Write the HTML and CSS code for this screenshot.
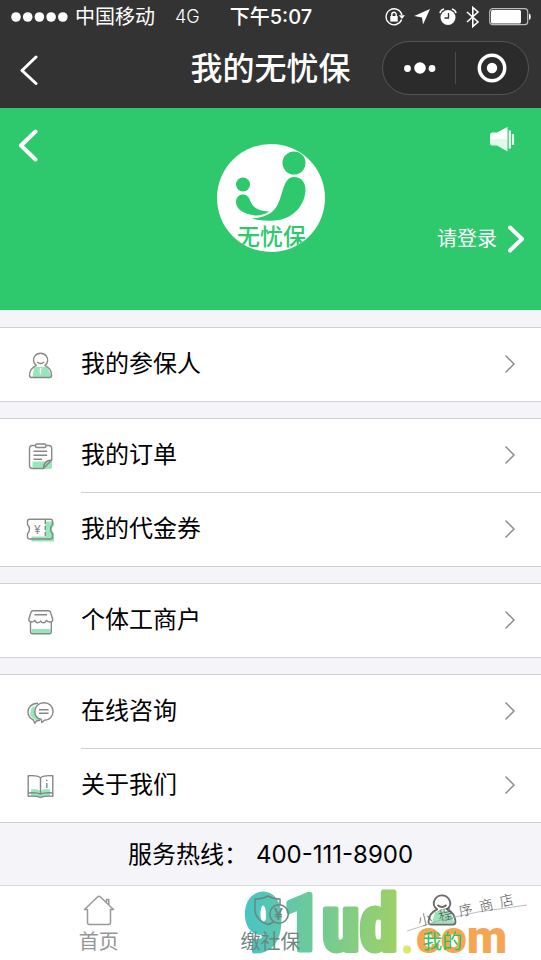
FILE: index.html
```html
<!DOCTYPE html>
<html lang="zh-CN">
<head>
<meta charset="utf-8">
<meta name="viewport" content="width=device-width, initial-scale=1">
<title>我的无忧保</title>
<link rel="stylesheet" href="styles.css">
</head>
<body>
<header class="top">
  <div class="status">
    <svg class="signal" width="58" height="12" viewBox="0 0 58 12" fill="#fff"><circle cx="5" cy="6" r="4.8"/><circle cx="16.7" cy="6" r="4.8"/><circle cx="28.4" cy="6" r="4.8"/><circle cx="40.1" cy="6" r="4.8"/><circle cx="51.8" cy="6" r="4.8"/></svg>
    <span class="carrier">中国移动</span>
    <span class="network">4G</span>
    <span class="time">下午5:07</span>
    <span class="status-icons">
      <svg width="20" height="20" viewBox="0 0 20 20" fill="none" stroke="#fff" stroke-width="1.4"><path d="M16.6 12.6A8 8 0 1 1 16.9 8"/><path d="M13.8 8.2h6.2l-3.1 3.8z" fill="#fff" stroke="none"/><rect x="5.3" y="9" width="7.4" height="5.6" fill="#fff" stroke="none"/><path d="M6.8 9.5V7.6a2.2 2.4 0 0 1 4.4 0v1.9"/></svg>
      <svg width="16" height="20" viewBox="0 0 16 20" fill="#fff"><path d="M16 2 9 17.5 8 10.5.2 9z"/></svg>
      <svg width="18" height="20" viewBox="0 0 18 20"><circle cx="9" cy="10.5" r="7.5" fill="#fff"/><path d="M9.5 6v5H5.5" fill="none" stroke="#333" stroke-width="1.3"/><path d="M1 6.2Q1.5 3 5 2M17 6.2Q16.500 3 13 2" fill="none" stroke="#fff" stroke-width="1.6"/></svg>
      <svg width="14" height="22" viewBox="0 0 14 22" fill="none" stroke="#fff" stroke-width="1.6"><path d="M1 6l11 10-5.200 4.500V1.500L12 6 1 16"/></svg>
      <svg width="42" height="18" viewBox="0 0 42 18"><rect x=".7" y=".7" width="38" height="16" rx="3" fill="none" stroke="#bbb" stroke-width="1.200"/><rect x="2" y="2" width="30" height="13.500" rx="1.500" fill="#fff"/><path d="M40 5.500q1.800.5 1.800 3.200T40 12z" fill="#fff"/></svg>
    </span>
  </div>
  <nav class="nav">
    <button class="icon-button nav-back" aria-label="返回"><svg width="18" height="30" viewBox="0 0 18 30" fill="none" stroke="#fff" stroke-width="3" stroke-linecap="round" stroke-linejoin="round"><path d="M16 2 2 15.500 16 28.500"/></svg></button>
    <h1 class="title">我的无忧保</h1>
    <div class="capsule">
      <button class="icon-button capsule-part" aria-label="更多"><svg width="34" height="14" viewBox="0 0 34 14" fill="#fff"><circle cx="5.500" cy="7.500" r="3.400"/><circle cx="18" cy="7" r="5.800"/><circle cx="30" cy="7.500" r="3.400"/></svg></button>
      <button class="icon-button capsule-part" aria-label="关闭"><svg width="30" height="30" viewBox="0 0 30 30"><circle cx="15" cy="15" r="12.700" fill="none" stroke="#fff" stroke-width="3.500"/><circle cx="15" cy="15" r="5.200" fill="#fff"/></svg></button>
    </div>
  </nav>
</header>

<main>
  <section class="hero">
    <button class="icon-button hero-back" aria-label="返回"><svg width="22" height="38" viewBox="0 0 22 38" fill="none" stroke="#fff" stroke-width="4" stroke-linecap="round" stroke-linejoin="round"><path d="M19.500 5.500 5 19.500 19.500 33.500"/></svg></button>
    <svg class="avatar" width="108" height="108" viewBox="0 0 108 108" role="img" aria-label="无忧保">
      <defs><clipPath id="round"><circle cx="54" cy="54" r="54"/></clipPath></defs>
      <g clip-path="url(#round)">
        <rect width="108" height="108" fill="#fff"/>
        <g fill="#2ec96d">
          <circle cx="77" cy="19" r="11.500"/>
          <circle cx="26" cy="40.500" r="7"/>
          <path d="M19 58C19 49 30 48 32.500 55C35 62 39 67 52 67.500C48 70.500 42 72 38 71.500C28 70 19 66 19 58Z"/>
          <path d="M35 74.500C42 74 51 72 56 67C67 57 64 33 77 33C85 33 88.500 39 88.500 46C88 62 75 76 57 76.500C49 77 41 76.500 35 74.500Z"/>
          <text class="avatar-name" x="20" y="101">无忧保</text>
        </g>
      </g>
    </svg>
    <div class="hero-side">
      <button class="icon-button speaker" aria-label="消息"><svg width="26" height="28" viewBox="0 0 26 28"><path d="M1 9q0-2 2-2.500h5L18.500 1v13H1z" fill="#fff"/><path d="M1 13h17.500v12.500L8 19.500H3q-2 0-2-2.500z" fill="#e0fbea"/><path d="M20.800 4.500v18" stroke="#fff" stroke-width="2.200"/><path d="M24 8v11" stroke="#e0fbea" stroke-width="2.200"/></svg></button>
      <a class="login" href="#login">请登录<svg width="18" height="28" viewBox="0 0 18 28" fill="none" stroke="#fff" stroke-width="4" stroke-linecap="round" stroke-linejoin="round"><path d="M3 2.500 15 14 3 25.500"/></svg></a>
    </div>
  </section>

  <div class="groups">
    <section class="group">
      <a class="row" href="#insured">
        <svg class="row-icon" viewBox="0 0 28 28"><path class="tint" d="M8 16h13l4.500 8.500q0 2-2 2H6.500z"/><path d="M10.300 14.300C7 12 6.800 8 8.800 5.200Q11 2.200 14.600 2.200T20.400 5.200C22.400 8 22.200 12 18.900 14.300C23.500 16.500 25.600 21 25.600 24.500q0 2-2 2H5.500q-2 0-2-2C3.500 21 5.700 16.500 10.300 14.300Z"/><path d="M11 11q3.600 3.200 7.200 0"/><path class="light" d="M14.500 17v6"/></svg>
        <span class="row-body">我的参保人<svg class="arrow" viewBox="0 0 12 20"><path d="M1.500 1.500 10 10 1.500 18.500"/></svg></span>
      </a>
    </section>
    <section class="group">
      <a class="row" href="#orders">
        <svg class="row-icon" viewBox="0 0 28 28"><path class="tint" d="M6.500 19.500H26V25q0 2-2 2H6.500z"/><path d="M9.500 3.500h-3q-3 0-3 3v17q0 3 3 3H17.500L25.700 18V6.500q0-3-3-3h-3M17.500 26.500q0-8 8.200-8.500"/><rect x="9.500" y="2" width="10.500" height="3.500" rx="1.500"/><path d="M7.500 9.200h13.700M7.500 13.200h13.700M7.500 17.200H16"/></svg>
        <span class="row-body">我的订单<svg class="arrow" viewBox="0 0 12 20"><path d="M1.500 1.500 10 10 1.500 18.500"/></svg></span>
      </a>
      <a class="row" href="#vouchers">
        <svg class="row-icon" viewBox="0 0 28 28"><path class="tint" d="M19.300 6.500H28v4q-4 4 0 8v8H5.500v-5h13.800z"/><path d="M4 4.200h20.500q2 0 2 2v3.300q-4 4.700 0 9.200V22q0 2-2 2H4q-2.500 0-2.500-2v-3.300q4-4.500 0-9.200V6.200q0-2 2.500-2Z"/><path d="M19.300 5v18" stroke-dasharray="4 2"/><text class="yen" x="8" y="18.500">¥</text></svg>
        <span class="row-body">我的代金券<svg class="arrow" viewBox="0 0 12 20"><path d="M1.500 1.500 10 10 1.500 18.500"/></svg></span>
      </a>
    </section>
    <section class="group">
      <a class="row" href="#business">
        <svg class="row-icon" viewBox="0 0 28 28"><path class="tint" d="M5.500 22h19v4.500h-19z"/><path d="M7 3.700h15.500q1.500 0 2 1.500l2.200 7q.2 2.800-3 2.800-2.500 0-3.200-1.700-1 2.500-3 2.500T14.700 14q-1 1.800-2.900 1.800T8.800 13.300Q8 15 5.700 15 2.800 14.800 2.800 12.200L5 5.200Q5.500 3.700 7 3.700ZM4.500 15v9.500q0 2.200 2 2.200h16.800q2 0 2-2.200V15M8.500 7.800h12.500"/></svg>
        <span class="row-body">个体工商户<svg class="arrow" viewBox="0 0 12 20"><path d="M1.500 1.500 10 10 1.500 18.500"/></svg></span>
      </a>
    </section>
    <section class="group">
      <a class="row" href="#chat">
        <svg class="row-icon" viewBox="0 0 28 28"><path class="tint" d="M8.500 7Q3 12 4.500 18l6 5 4-1Q6.500 17 8.500 7Z"/><path d="M12 5.200C5 5.200 2 9.500 2 14.200q0 5 5.500 8l1.200 3 2-2.500 3.300-.5"/><path d="M18 4.700c5.500 0 9 4 9 8.800s-3.500 8.700-8.500 8.700L15.800 24.500l-.6-3C11 20.500 8.800 17.500 8.800 13.500c0-4.800 3.700-8.800 9.200-8.800ZM13 11.700h9.500M13 15.200h9.500"/></svg>
        <span class="row-body">在线咨询<svg class="arrow" viewBox="0 0 12 20"><path d="M1.500 1.500 10 10 1.500 18.500"/></svg></span>
      </a>
      <a class="row" href="#about">
        <svg class="row-icon" viewBox="0 0 28 28"><path class="tint" d="M5 18.500q5-1.500 9.500 1.500 4.500-3 9.500-1.500v7q-5-.5-9.500 1.500Q10 25 5 25.500z"/><path d="M14.500 6.700Q11 4 2.200 4.800v20.400q8.800-.5 12.300 1.300 3.500-1.800 12.300-1.300V4.800Q18 4 14.500 6.700V23M2.200 22q8.800-1 12.300 1.200Q18 21 26.800 22M20.800 12v5M20.800 8.800v1.400"/></svg>
        <span class="row-body">关于我们<svg class="arrow" viewBox="0 0 12 20"><path d="M1.500 1.500 10 10 1.500 18.500"/></svg></span>
      </a>
    </section>
  </div>

  <p class="hotline"><span>服务热线：</span><a class="phone" href="tel:4001118900">400-111-8900</a></p>
</main>

<footer class="tabbar">
  <svg class="watermark" width="301" height="74" viewBox="240 886 301 74" aria-hidden="true">
    <defs><linearGradient id="sea" gradientUnits="userSpaceOnUse" x1="244" y1="0" x2="394" y2="0"><stop offset="0" stop-color="#48c4c4"/><stop offset="1" stop-color="#9cd068"/></linearGradient></defs>
    <text class="mark-main" x="244" y="950" fill="url(#sea)" stroke="url(#sea)">91ud</text>
    <circle cx="407" cy="949.500" r="4" fill="#dfe76b"/>
    <text class="mark-com" x="416" y="953">com</text>
  </svg>
  <a class="tab" href="#home">
    <svg width="32" height="32" viewBox="0 0 32 32"><path d="M4.500 15.500H1.500L14.500 3q1.500-1.400 3 0L30.500 15.500H27.500V28.500q0 2-2 2H6.500q-2 0-2-2ZM23.500 9V5.500h2.300v5.700"/></svg>
    <span>首页</span>
  </a>
  <a class="tab tab-pay" href="#pay">
    <svg width="36" height="32" viewBox="0 0 36 32"><path d="M27 11V5Q20 5 15 2 10 5 2 5v12q1 9.500 13 13.500 3-1 5.500-2.500"/><circle cx="26" cy="20" r="9.300"/><text class="yen yen-large" x="21" y="26">¥</text></svg>
    <span>缴社保</span>
  </a>
  <a class="tab tab-current" href="#mine" aria-current="page">
    <svg width="32" height="32" viewBox="0 0 32 32"><path class="tint" d="M9 18q7-3 15 0l4.500 11H6z"/><path d="M11.200 15.300C7.500 12.500 7 8.500 9 5.200Q11.500 1.300 16 1.300T23 5.200C25 8.500 24.500 12.500 20.800 15.300C26 17.500 29 22 29.500 27.500q0 3-2.500 3H5q-2.500 0-2.500-3C3 22 6 17.500 11.200 15.300Z"/><path d="M11.500 11q4.500 4 9 0"/></svg>
    <span>我的</span>
  </a>
  <svg class="watermark watermark-over" width="301" height="74" viewBox="240 886 301 74" aria-hidden="true">
    <path d="M407 931 441 920 478 912 527 905" fill="none" stroke="#aaa" stroke-width=".8"/>
    <text class="mark-note" transform="translate(419 926) rotate(-13)">小&#8194;程&#8194;序&#8194;商&#8194;店</text>
  </svg>
</footer>
</body>
</html>
```
FILE: styles.css
```css
* {
  box-sizing: border-box;
}

body {
  margin: 0;
  min-height: 100vh;
  display: flex;
  flex-direction: column;
  background: #f4f4f9;
  color: #000;
  font-family: Inter, "Noto Sans CJK SC", sans-serif;
  font-size: 24px;
}

a {
  color: inherit;
  text-decoration: none;
}

svg {
  display: block;
  flex: none;
}

.icon-button {
  display: flex;
  align-items: center;
  justify-content: center;
  padding: 0;
  border: 0;
  background: none;
}

.top {
  background: #333;
  color: #fff;
  padding-bottom: 6px;
}

.status {
  display: flex;
  align-items: center;
  height: 34px;
  padding: 0 10px 0 11px;
  font-size: 20px;
  font-weight: 400;
  line-height: 34px;
}

.carrier {
  margin-left: 6px;
}

.network {
  margin-left: 20px;
  font-size: 18px;
  font-weight: 300;
}

.time {
  margin-left: 30px;
  font-weight: 500;
}

.status-icons {
  display: flex;
  align-items: center;
  gap: 9px;
  margin-left: auto;
}

.nav {
  display: grid;
  grid-template-columns: 1fr auto 1fr;
  align-items: center;
  min-height: 68px;
  padding: 0 12px;
}

.nav-back {
  justify-self: start;
  padding: 4px 8px 0;
}

.title {
  margin: 0;
  padding-top: 2px;
  font-size: 32px;
  font-weight: 500;
  line-height: 48px;
}

.capsule {
  justify-self: end;
  display: flex;
  align-items: center;
  width: 147px;
  height: 54px;
  border: 1px solid #555;
  border-radius: 27px;
  background: #2b2b2b;
}

.capsule-part {
  flex: 1;
  height: 32px;
}

.capsule-part + .capsule-part {
  border-left: 1px solid #4c4c4c;
}

.hero {
  display: grid;
  grid-template-columns: 1fr auto 1fr;
  align-items: start;
  padding: 18px 16px 56px;
  background: #2ec96d;
  color: #fff;
}

.hero-back {
  justify-self: start;
}

.avatar {
  margin-top: 18px;
}

.avatar-name {
  font-family: "Noto Sans CJK SC", sans-serif;
  font-size: 23px;
  font-weight: 500;
}

.hero-side {
  display: flex;
  flex-direction: column;
  align-items: flex-end;
  gap: 70px;
}

.speaker {
  margin-right: 10px;
}

.login {
  display: flex;
  align-items: center;
  gap: 10px;
  font-size: 20px;
  line-height: 30px;
}

.groups {
  display: flex;
  flex-direction: column;
  gap: 16px;
  padding-top: 17px;
}

.group {
  border: solid #d0d0d4;
  border-width: 1px 0;
  background: #fff;
}

.row {
  display: flex;
  align-items: center;
  gap: 27px;
  padding-left: 26px;
}

.row-icon {
  width: 28px;
  height: 28px;
}

.row-icon,
.tab svg {
  fill: none;
  stroke: #888;
  stroke-width: 1.4;
  stroke-linejoin: round;
}

.row-body {
  flex: 1;
  display: flex;
  align-items: center;
  justify-content: space-between;
  min-height: 73px;
  padding: 0 25px 1px 0;
  line-height: 34px;
}

.row + .row .row-body {
  min-height: 74px;
  border-top: 1px solid #d0d0d4;
}

.arrow {
  width: 12px;
  height: 20px;
  fill: none;
  stroke: #8c8c8c;
  stroke-width: 1.5;
}

.row-icon .tint,
.tab .tint {
  fill: #98e7bb;
  stroke: none;
}

.row-icon .light {
  stroke: #fff;
}

.yen {
  fill: #888;
  stroke: none;
  font-family: Inter, sans-serif;
  font-size: 12px;
}

.yen-large {
  fill: #6f8480;
  font-size: 16px;
  font-weight: 500;
}

.hotline {
  display: flex;
  justify-content: center;
  margin: 0;
  padding-top: 2px;
  line-height: 60px;
}

.phone {
  margin-left: 8px;
}

.tabbar {
  position: relative;
  flex: 1;
  display: flex;
  align-items: flex-start;
  min-height: 75px;
  padding: 8px 13px 2px;
  border-top: 1px solid #d9d9dd;
  background: #fff;
  color: #969696;
}

.tab {
  position: relative;
  flex: 1;
  display: flex;
  flex-direction: column;
  align-items: center;
  font-size: 20px;
  line-height: 32px;
}

.tab svg {
  stroke: #999;
  stroke-width: 1.5;
}

.tab-pay {
  color: #6f8480;
}

.tab-pay svg {
  stroke: #6f8480;
}

.tab-current {
  color: #2ec35c;
}

.tab-current svg {
  stroke: #6b6b6b;
  stroke-width: 1.8;
}

.watermark {
  position: absolute;
  right: 0;
  bottom: 0;
}

.watermark-over {
  pointer-events: none;
}

.mark-main {
  font-family: "Liberation Sans Narrow", "Roboto Condensed", "Liberation Sans", sans-serif;
  font-size: 77px;
  font-weight: 700;
  stroke-width: 5;
  stroke-linejoin: round;
}

.mark-com {
  fill: #f5a653;
  font-family: Roboto, sans-serif;
  font-size: 47px;
  font-weight: 900;
}

.mark-note {
  fill: #555;
  font-family: "Noto Sans CJK SC", sans-serif;
  font-size: 14px;
  font-weight: 300;
}
```
